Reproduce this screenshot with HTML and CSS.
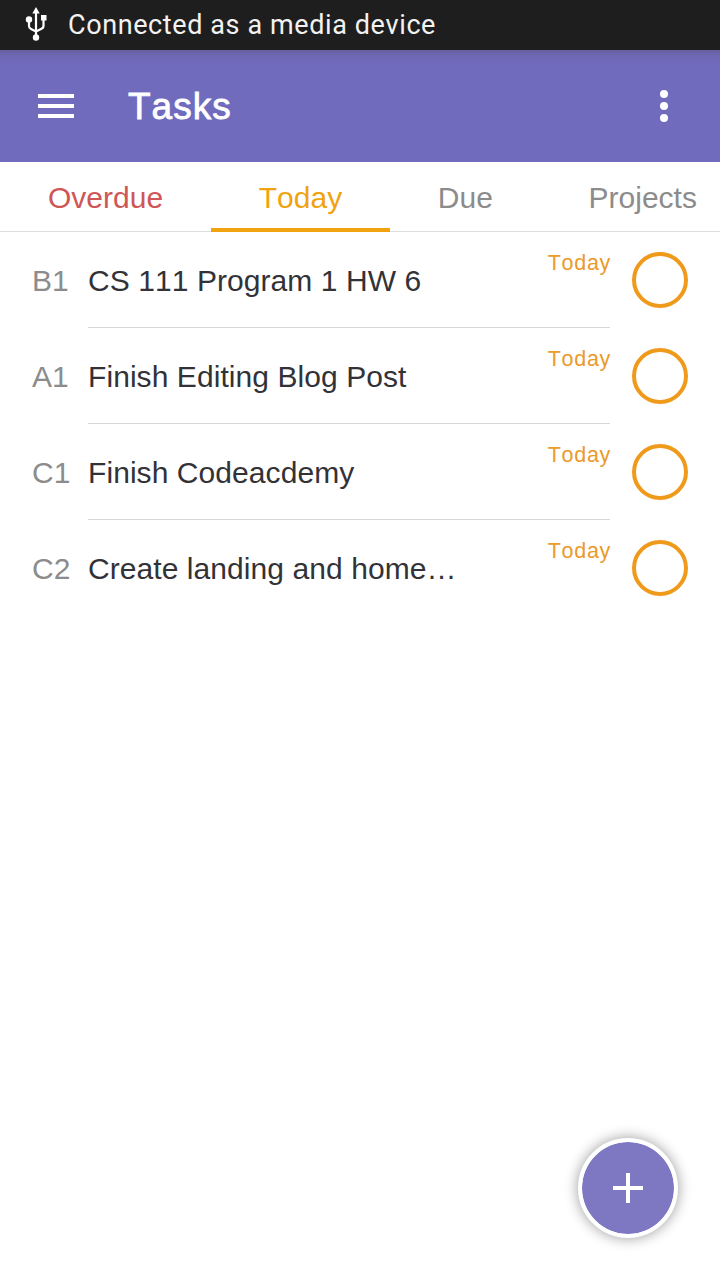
FILE: index.html
```
<!DOCTYPE html>
<html lang="en">
<head>
    <meta charset="UTF-8">
    <meta name="viewport" content="width=device-width, initial-scale=1.0">
    <title>Tasks</title>
    <link rel="stylesheet" href="styles.css">
</head>
<body>
    <div class="status-bar">
        <svg class="usb" width="24" height="36" viewBox="0 0 24 36">
            <path d="M12 5v26M5 14v5q0 2 2 3l5 2.500l5-2.500q2.500-1 2.500-3v-6" fill="none" stroke="#fff" stroke-width="2.200"/>
            <path d="M12 0l3.700 6.500h-7.400zM17 8h5.500v5.500H17z" fill="#fff"/>
            <circle cx="5" cy="12.500" r="3.200" fill="#fff"/>
            <circle cx="12" cy="30.500" r="3.200" fill="#fff"/>
        </svg>
        <span>Connected as a media device</span>
    </div>

    <header class="app-bar">
        <svg width="36" height="24" viewBox="0 0 36 24" fill="#fff">
            <path d="M0 0h36v4H0zM0 10h36v4H0zM0 20h36v4H0z"/>
        </svg>
        <h1>Tasks</h1>
        <svg width="8" height="32" viewBox="0 0 8 32" fill="#fff">
            <circle cx="4" cy="4" r="4"/>
            <circle cx="4" cy="16" r="4"/>
            <circle cx="4" cy="28" r="4"/>
        </svg>
    </header>

    <nav class="tabs">
        <div class="tab overdue">Overdue</div>
        <div class="tab active">Today</div>
        <div class="tab">Due</div>
        <div class="tab">Projects</div>
    </nav>

    <ul class="tasks">
        <li class="task">
            <span class="priority">B1</span>
            <div class="details"><span class="name">CS 111 Program 1 HW 6</span><span class="date">Today</span></div>
            <span class="check"></span>
        </li>
        <li class="task">
            <span class="priority">A1</span>
            <div class="details"><span class="name">Finish Editing Blog Post</span><span class="date">Today</span></div>
            <span class="check"></span>
        </li>
        <li class="task">
            <span class="priority">C1</span>
            <div class="details"><span class="name">Finish Codeacdemy</span><span class="date">Today</span></div>
            <span class="check"></span>
        </li>
        <li class="task">
            <span class="priority">C2</span>
            <div class="details"><span class="name">Create landing and home…</span><span class="date">Today</span></div>
            <span class="check"></span>
        </li>
    </ul>

    <div class="add-button">
        <svg width="30" height="30" viewBox="0 0 30 30" fill="#fff">
            <path d="M13 0h4v13h13v4H17v13h-4V17H0v-4h13z"/>
        </svg>
    </div>
</body>
</html>
```
FILE: styles.css
```
* {
    box-sizing: border-box;
}
body {
    margin: 0;
    height: 1280px;
    overflow: hidden;
    background-color: #fff;
    font-family: "Liberation Sans", Arial, sans-serif;
    font-size: 30px;
    font-kerning: none;
}
.status-bar {
    display: flex;
    align-items: center;
    gap: 20px;
    height: 50px;
    padding: 0 24px 1px;
    background-color: #1e1e1e;
    color: #f2f2f2;
    font-family: Roboto, sans-serif;
    font-size: 27px;
    letter-spacing: 0.6px;
}
.app-bar {
    display: flex;
    align-items: center;
    height: 112px;
    padding: 0 52px 0 38px;
    background: linear-gradient(#655f9f, #6e68b5 6px, #716bbe 16px);
    color: #fff;
}
.app-bar h1 {
    flex: 1;
    margin: 2px 0 0 54px;
    font-size: 37px;
    font-weight: normal;
    letter-spacing: 1px;
    -webkit-text-stroke: 0.8px #fff;
}
.tabs {
    display: flex;
    height: 70px;
    overflow: hidden;
    box-shadow: inset 0 -1px #ddd;
    line-height: 72px;
    color: #8c8c8c;
}
.tab {
    flex: none;
    padding: 0 47.700px 0 48px;
}
.overdue {
    color: #cf5656;
}
.active {
    color: #f0a30f;
    box-shadow: inset 0 -4px #f0a30f;
}
.tasks {
    margin: 0;
    padding: 0;
    list-style: none;
}
.task {
    display: flex;
    height: 96px;
    padding: 0 32px;
    line-height: 98px;
}
.priority {
    width: 56px;
    color: #8c8c8c;
}
.details {
    display: flex;
    justify-content: space-between;
    width: 522px;
    border-bottom: 1px solid #d8d8d8;
}
.task:last-child .details {
    border-bottom: none;
}
.name {
    color: #323237;
    letter-spacing: 0.07px;
}
.date {
    margin-right: -1px;
    color: #ec9a29;
    font-size: 21.500px;
    letter-spacing: 0.7px;
    line-height: 62px;
}
.check {
    width: 56px;
    height: 56px;
    margin: 20px 0 0 22px;
    border: 4px solid #f09a1c;
    border-radius: 50%;
}
.add-button {
    position: fixed;
    right: 42px;
    bottom: 42px;
    display: flex;
    align-items: center;
    justify-content: center;
    width: 100px;
    height: 100px;
    border: 4px solid #fff;
    border-radius: 50%;
    background-color: #7e78c3;
    background-clip: padding-box;
    box-shadow: 0 0 14px rgba(0, 0, 0, 0.4);
}
```
